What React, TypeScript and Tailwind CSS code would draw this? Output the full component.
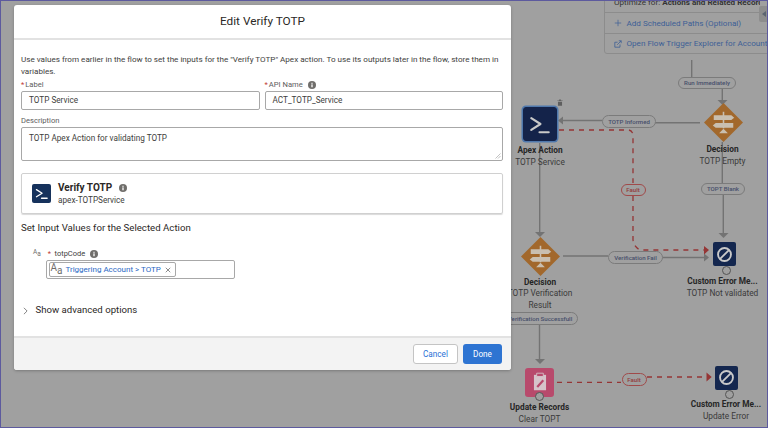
import React from 'react'

const Info = ({ className = '' }: { className?: string }) => (
  <svg viewBox="0 0 10 10" className={`inline-block w-[8px] h-[8px] ${className}`}>
    <circle cx="5" cy="5" r="5" fill="#706e6b" />
    <rect x="4.2" y="4.2" width="1.6" height="3.6" fill="#fff" />
    <rect x="4.2" y="2.2" width="1.6" height="1.3" fill="#fff" />
  </svg>
)

const Req = () => <span className="text-[#c23934] mr-px">*</span>

const TerminalGlyph = ({ className = '' }: { className?: string }) => (
  <svg viewBox="0 0 32 32" fill="none" className={className}>
    <path d="M7.5 9.5 L17 15.5 L7.5 21.5" stroke="currentColor" strokeWidth="2.2" strokeLinecap="round" strokeLinejoin="round" />
    <path d="M16 24 H25.5" stroke="currentColor" strokeWidth="2.2" strokeLinecap="round" />
  </svg>
)

const Aa = ({ big = false }: { big?: boolean }) => (
  <span className={`inline-flex items-start text-[#706e6b] leading-none ${big ? 'text-[10px]' : 'text-[6.5px]'}`}>
    <span>A</span>
    <span className={big ? 'mt-[3px]' : 'mt-[2px]'}>a</span>
  </span>
)

function Modal() {
  return (
    <div className="absolute left-[14px] top-[5px] w-[497px] h-[365px] bg-white rounded-[3px] shadow-[0_1px_3px_rgba(0,0,0,0.25)] flex flex-col overflow-hidden z-10">
      <div className="h-[35px] shrink-0 pt-[1px] flex items-center justify-center border-b-2 border-[#e2e2e2] text-[11.8px] text-[#2b2826]">
        Edit Verify TOTP
      </div>

      <div className="flex-1 px-[7px] pt-[14px] text-[#3e3e3c]">
        <p className="text-[8.1px] leading-[11.5px] pr-[1px]">
          Use values from earlier in the flow to set the inputs for the "Verify TOTP" Apex action. To use its outputs later in the flow, store them in variables.
        </p>

        <div className="grid grid-cols-2 gap-x-[5px] w-[482px] mt-[2px]">
          <div>
            <div className="h-[11px] text-[7.6px] leading-[11px] text-[#5c5c5c] flex items-center"><Req />Label</div>
            <div className="mt-[1px] h-[19px] border border-[#a8a8a8] rounded-[2px] px-[7px] flex items-center text-[8.2px]">TOTP Service</div>
          </div>
          <div>
            <div className="h-[11px] text-[7.6px] leading-[11px] text-[#5c5c5c] flex items-center"><Req />API Name<Info className="ml-[5px]" /></div>
            <div className="mt-[1px] h-[19px] border border-[#a8a8a8] rounded-[2px] px-[7px] flex items-center text-[8.2px]">ACT_TOTP_Service</div>
          </div>
        </div>

        <div className="mt-[5px] h-[11px] text-[7.6px] leading-[11px] text-[#5c5c5c]">Description</div>
        <div className="relative mt-[1px] w-[482px] h-[34px] border border-[#a8a8a8] rounded-[2px] px-[7px] pt-[5px] text-[8.2px] leading-[11px]">
          TOTP Apex Action for validating TOTP
          <svg viewBox="0 0 6 6" className="absolute right-[1px] bottom-[1px] w-[6px] h-[6px]">
            <path d="M0.5 5.5 L5.5 0.5 M3 5.5 L5.5 3" stroke="#999" strokeWidth="0.6" />
          </svg>
        </div>

        <div className="mt-[12px] w-[482px] h-[41px] border border-[#d0d0d0] rounded-[2px] shadow-[0_1px_1px_rgba(0,0,0,0.15)] flex items-center pl-[10px]">
          <div className="w-[19px] h-[19px] rounded-[2px] bg-[#16325c] text-white flex items-center justify-center">
            <TerminalGlyph className="w-[19px] h-[19px]" />
          </div>
          <div className="ml-[7px]">
            <div className="text-[10px] leading-[13px] font-bold text-[#2b2826] flex items-center">Verify TOTP<Info className="ml-[7px]" /></div>
            <div className="mt-[1px] text-[8.2px] leading-[11px]">apex-TOTPService</div>
          </div>
        </div>

        <div className="mt-[7px] h-[14px] text-[9.66px] leading-[14px] text-[#2b2826]">Set Input Values for the Selected Action</div>

        <div className="ml-[12px] mt-[13px] h-[11px] flex items-center text-[7.5px] text-[#3e3e3c]">
          <Aa />
          <span className="text-[#c23934] ml-[7px] mr-[3.5px]">*</span>
          totpCode
          <Info className="ml-[5px]" />
        </div>
        <div className="ml-[25px] mt-[1px] w-[189px] h-[19px] border border-[#a8a8a8] rounded-[2px] flex items-center pl-[1.5px]">
          <div className="h-[15px] w-[127px] border border-[#a8a8a8] rounded-[2px] flex items-center pl-[1px]">
            <Aa big />
            <span className="ml-[3px] text-[8px] text-[#2a69c4] whitespace-nowrap">Triggering Account &gt; TOTP</span>
            <svg viewBox="0 0 8 8" className="ml-[4px] w-[6px] h-[6px]">
              <path d="M1 1 L7 7 M7 1 L1 7" stroke="#555" strokeWidth="0.9" />
            </svg>
          </div>
        </div>

        <div className="mt-[24px] h-[14px] flex items-center text-[9.6px] text-[#2b2826]">
          <svg viewBox="0 0 6 10" className="ml-[1.5px] w-[5px] h-[8px] mt-[1px]">
            <path d="M1 1 L5 5 L1 9" fill="none" stroke="#555" strokeWidth="0.9" />
          </svg>
          <span className="ml-[8px]">Show advanced options</span>
        </div>
      </div>

      <div className="h-[34px] shrink-0 border-t-2 border-[#e2e2e2] bg-[#f3f3f3] flex items-center justify-end pr-[9px] gap-[5px]">
        <button className="w-[45px] h-[20px] bg-white border border-[#c4c4c4] rounded-[3px] text-[8.2px] text-[#2a6fd6]">Cancel</button>
        <button className="w-[39px] h-[20px] bg-[#2e74d2] rounded-[3px] text-[8.2px] text-white">Done</button>
      </div>
    </div>
  )
}

const Pill = ({ className, fault = false, children }: { className: string; fault?: boolean; children: React.ReactNode }) => (
  <div className={`absolute bg-[#a0a0a0] border rounded-full flex items-center justify-center text-[6.1px] font-medium whitespace-nowrap ${fault ? 'border-[#a04a4a] text-[#933c3c]' : 'border-[#7b7b7b] text-[#474f6b]'} ${className}`}>
    {children}
  </div>
)

const NodeLabel = ({ className, title, lines }: { className: string; title: string; lines: string[] }) => (
  <div className={`absolute -translate-x-1/2 text-center whitespace-nowrap text-[8.3px] leading-[11.6px] text-[#333] ${className}`}>
    <div className="font-bold text-[#262626]">{title}</div>
    {lines.map((l) => <div key={l} className="text-[#3a3a3a]">{l}</div>)}
  </div>
)

const Diamond = ({ className }: { className: string }) => (
  <svg viewBox="0 0 40 40" className={`absolute w-[39px] h-[39px] ${className}`}>
    <path d="M20 0 L40 20 L20 40 L0 20 Z" fill="#a2682c" />
    <path d="M19.2 9 h1.6 v17 h-1.6 z" fill="#c9bfb0" />
    <path d="M10 12.5 H28 L31 15 L28 17.5 H10 Z" fill="#c9bfb0" />
    <path d="M30 20.5 H12 L9 23 L12 25.5 H30 Z" fill="#c9bfb0" />
    <path d="M20 26.5 L24.5 31 H15.5 Z" fill="#c9bfb0" />
  </svg>
)

const StopNode = ({ className }: { className: string }) => (
  <div className={`absolute w-[23px] h-[24px] rounded-[2px] bg-[#14274f] flex items-center justify-center ${className}`}>
    <svg viewBox="0 0 20 20" className="w-[17px] h-[17px]" fill="none">
      <circle cx="10" cy="10" r="7.6" stroke="#c9c9c9" strokeWidth="2.2" />
      <path d="M4.8 15.2 L15.2 4.8" stroke="#c9c9c9" strokeWidth="2.2" />
    </svg>
  </div>
)

const Ring = ({ className }: { className: string }) => (
  <div className={`absolute w-[9px] h-[9px] rounded-full border border-[#555] bg-[#a0a0a0] ${className}`} />
)

function Connectors() {
  const solid = '#737373'
  const red = '#953535'
  return (
    <svg viewBox="0 0 768 428" className="absolute inset-0 w-[768px] h-[428px]" fill="none">
      <g stroke={solid} strokeWidth="1.4">
        <path d="M691.7 60 V77" />
        <path d="M722.3 88 V101" />
        <path d="M700 122.7 H655" />
        <path d="M602 120.5 H562" />
        <path d="M722.3 142 V183" />
        <path d="M723.3 195 V234" />
        <path d="M539.7 143 V234" />
        <path d="M563 256 H608" />
        <path d="M662 257.5 H705" />
        <path d="M539.5 324 V360" />
      </g>
      <g fill={solid}>
        <path d="M717.5 100 H727.5 L722.5 105 Z" />
        <path d="M563 116.5 V124.5 L558 120.5 Z" />
        <path d="M718.5 233 H728.5 L723.5 238 Z" />
        <path d="M535 232 H545 L540 237 Z" />
        <path d="M704 253.5 V261.5 L709 257.5 Z" />
        <path d="M535 359 H545 L540 364 Z" />
      </g>
      <g stroke={red} strokeWidth="1.3" strokeDasharray="5 5">
        <path d="M559 130 H629 Q633 131 633 136 V183" />
        <path d="M633 196 V240 Q634 247 640 250 H704" />
        <path d="M557 382.3 H621" />
        <path d="M647 377 H706" />
      </g>
      <g fill={red}>
        <path d="M704 246 V254.5 L709 250 Z" />
        <path d="M706.5 372.5 V381.5 L711.7 377 Z" />
      </g>
    </svg>
  )
}

function Canvas() {
  return (
    <>
      <Connectors />

      {/* start element panel */}
      <div className="absolute left-[604px] top-[-10px] w-[180px] h-[64px] border border-[#8c8c8c] rounded-[3px] flex flex-col text-[8.1px] text-[#3d5f96]">
        <div className="h-[22px] border-b border-[#8c8c8c] pl-[9px] pt-[6px] leading-[10px] text-[#333] whitespace-nowrap overflow-hidden">
          Optimize for: <b>Actions and Related Records</b>
        </div>
        <div className="h-[21px] border-b border-[#8c8c8c] flex items-center pl-[9px]">
          <svg viewBox="0 0 10 10" className="w-[8px] h-[8px]"><path d="M5 1 V9 M1 5 H9" stroke="#3d5f96" strokeWidth="0.9" /></svg>
          <span className="ml-[4.5px] whitespace-nowrap">Add Scheduled Paths (Optional)</span>
        </div>
        <div className="flex-1 flex items-center pl-[9px]">
          <svg viewBox="0 0 10 10" className="w-[8px] h-[8px]" fill="none" stroke="#3d5f96" strokeWidth="1">
            <path d="M7.5 5.5 V9 H1 V2.8 H4.5" />
            <path d="M4 6 L9 1 M6 1 H9 V4" />
          </svg>
          <span className="ml-[4.5px] whitespace-nowrap">Open Flow Trigger Explorer for Account</span>
        </div>
      </div>
      <div className="absolute left-[760px] top-[0px] w-[8px] h-[22px] bg-[#a0a0a0]" />
      <div className="absolute left-[759px] top-[6px] w-[9px] h-[16px] bg-[#8d8d8d] rounded-l-[2px] flex items-center justify-center">
        <div className="w-0 h-0 border-y-[3.5px] border-y-transparent border-r-[4px] border-r-[#5c6470]" />
      </div>

      <Pill className="left-[678px] top-[77px] w-[58px] h-[12px]">Run Immediately</Pill>
      <Pill className="left-[602px] top-[115px] w-[54px] h-[13px]">TOTP Informed</Pill>
      <Pill className="left-[620.5px] top-[183.5px] w-[25px] h-[12.5px]" fault>Fault</Pill>
      <Pill className="left-[701px] top-[182.5px] w-[44px] h-[12.5px]">TOPT Blank</Pill>
      <Pill className="left-[608px] top-[251px] w-[55px] h-[12.5px]">Verification Fail</Pill>
      <Pill className="left-[502px] top-[312px] w-[76px] h-[13px]">Verification Successfull</Pill>
      <Pill className="left-[621.5px] top-[373px] w-[25px] h-[12.5px]" fault>Fault</Pill>

      {/* Apex action */}
      <svg viewBox="0 0 10 12" className="absolute left-[556.5px] top-[99px] w-[6px] h-[7px]">
        <path d="M0.5 2.5 H9.5 V3.5 H0.5 Z M3.5 2.5 V1 H6.5 V2.5 Z M1.5 4.5 H8.5 V11.5 H1.5 Z" fill="#5e5e5e" />
      </svg>
      <div className="absolute left-[523px] top-[107px] w-[33.5px] h-[34px] rounded-[3px] bg-[#14234a] border border-[#14234a] shadow-[0_0_0_1.5px_#4f78ad] flex items-center justify-center text-[#c9c9c9]">
        <TerminalGlyph className="w-[31px] h-[31px]" />
      </div>
      <NodeLabel className="left-[540px] top-[145px]" title="Apex Action" lines={['TOTP Service']} />

      <Diamond className="left-[703.5px] top-[103px]" />
      <NodeLabel className="left-[722.5px] top-[144px]" title="Decision" lines={['TOTP Empty']} />

      <Diamond className="left-[520.5px] top-[236.5px]" />
      <NodeLabel className="left-[540px] top-[276.5px]" title="Decision" lines={['TOTP Verification', 'Result']} />

      <StopNode className="left-[712.5px] top-[242px]" />
      <Ring className="left-[722px] top-[266px]" />
      <NodeLabel className="left-[722.5px] top-[276px]" title="Custom Error Me..." lines={['TOTP Not validated']} />

      {/* Update records */}
      <div className="absolute left-[525px] top-[368px] w-[29px] h-[29px] rounded-[3px] bg-[#b84a6c] flex items-center justify-center">
        <svg viewBox="0 0 20 20" className="w-[22px] h-[22px] -mt-[2px]" fill="none">
          <path d="M4.5 3.5 H15.5 V17.5 H4.5 Z" fill="#d6c4ca" />
          <path d="M7 2 H13 V5 H7 Z" fill="#b84a6c" stroke="#d6c4ca" strokeWidth="0.8" />
          <path d="M7.5 14.5 L13 8.5" stroke="#b84a6c" strokeWidth="2" />
        </svg>
      </div>
      <Ring className="left-[535px] top-[392px]" />
      <NodeLabel className="left-[539.5px] top-[402px]" title="Update Records" lines={['Clear TOPT']} />

      <StopNode className="left-[714.7px] top-[365.5px]" />
      <Ring className="left-[724.5px] top-[389.5px]" />
      <NodeLabel className="left-[726px] top-[399px]" title="Custom Error Me..." lines={['Update Error']} />
    </>
  )
}

export default function App() {
  return (
    <div className="relative w-[768px] h-[428px] overflow-hidden bg-[#a0a0a0] font-['Roboto',Arial,sans-serif]">
      <Canvas />
      <Modal />
      <div className="absolute inset-0 border border-[#5d5a9e] pointer-events-none z-20" />
    </div>
  )
}
